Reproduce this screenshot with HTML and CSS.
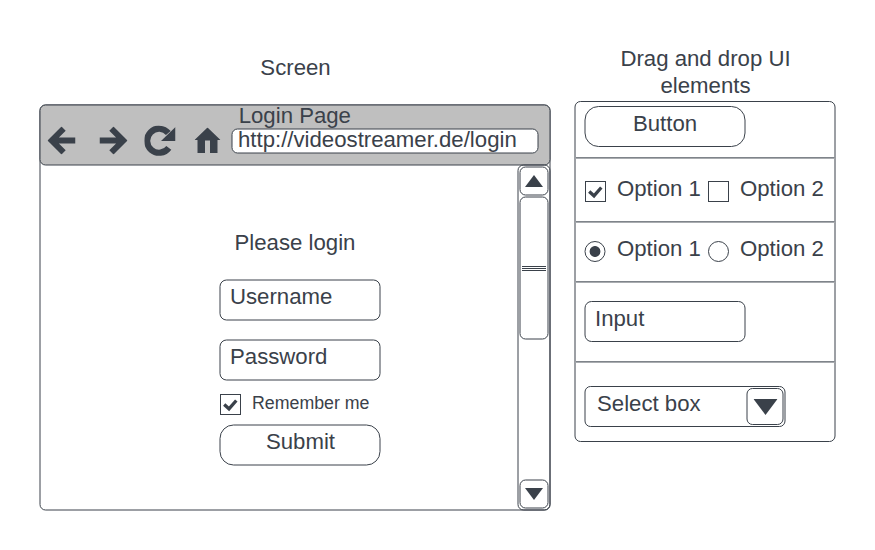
FILE: index.html
```html
<!DOCTYPE html>
<html lang="en">
<head>
<meta charset="utf-8">
<title>Login wireframe</title>
<link rel="stylesheet" href="styles.css">
</head>
<body>
<main class="board">
  <section class="screen">
    <h2 class="caption">Screen</h2>
    <div class="window">
      <header class="toolbar">
        <nav class="nav">
          <svg class="arrow" viewBox="0 0 28 28"><path d="M0 14 14 0l4.200 4.200-6.800 6.900H28v5.800H11.400l6.800 6.900L14 28z"/></svg>
          <svg class="arrow forward" viewBox="0 0 28 28"><path d="M28 14 14 0 9.800 4.200l6.800 6.900H0v5.800h16.600l-6.800 6.900L14 28z"/></svg>
          <svg class="reload" viewBox="0 0 31 31"><path class="ring" d="M24.300 22.300A12 12 0 1 1 23.800 7.500"/><path d="M31 1.500V15.500H16.500z"/></svg>
          <svg class="home" viewBox="0 0 26 26"><path d="M13 0 26 12.500H23V25.500H15.500V13H10.500V25.500H3V12.500H0z"/></svg>
        </nav>
        <div class="location">
          <div class="page-title">Login Page</div>
          <div class="address">http://videostreamer.de/login</div>
        </div>
      </header>
      <div class="content">
        <form class="login">
          <p class="prompt">Please login</p>
          <div class="field">Username</div>
          <div class="field">Password</div>
          <div class="remember">
            <span class="check"><svg viewBox="0 0 19 19"><path d="M3.200 9.500 8 13.800 15.300 5.500"/></svg></span>
            <span>Remember me</span>
          </div>
          <div class="button">Submit</div>
        </form>
        <div class="scrollbar">
          <div class="step"><svg viewBox="0 0 18 12"><path d="M9 0 18 12H0z"/></svg></div>
          <div class="thumb"><i></i><i></i><i></i></div>
          <div class="step last"><svg viewBox="0 0 18 12"><path d="M9 12 18 0H0z"/></svg></div>
        </div>
      </div>
    </div>
  </section>

  <section class="palette">
    <h2 class="caption">Drag and drop UI elements</h2>
    <div class="panel">
      <div class="row row-button"><div class="button">Button</div></div>
      <div class="row row-checks">
        <span class="check"><svg viewBox="0 0 19 19"><path d="M3.200 9.500 8 13.800 15.300 5.500"/></svg></span><span class="option">Option 1</span>
        <span class="check"></span><span class="option">Option 2</span>
      </div>
      <div class="row row-radios">
        <span class="radio on"></span><span class="option">Option 1</span>
        <span class="radio"></span><span class="option">Option 2</span>
      </div>
      <div class="row row-input"><div class="field">Input</div></div>
      <div class="row row-select">
        <div class="select"><span>Select box</span><div class="drop"><svg viewBox="0 0 24 16"><path d="M0 0H24L12 16z"/></svg></div></div>
      </div>
    </div>
  </section>
</main>
</body>
</html>
```
FILE: styles.css
```css
* { box-sizing: border-box; }
body {
  margin: 0;
  width: 875px;
  height: 550px;
  overflow: hidden;
  background: #fff;
  color: #3a414a;
  font: 22.2px/27px "Liberation Sans", Arial, sans-serif;
}
svg { display: block; fill: #3a414a; }
.board { display: flex; gap: 24px; padding: 0 0 0 40px; }
.caption { margin: 0; font: inherit; text-align: center; }

.screen { width: 511px; padding-top: 54px; }
.window {
  height: 406px;
  margin-top: 24px;
  border: 1px solid #3a414a;
  border-radius: 6px;
  transform: translate(-.5px, -.5px);
}
.toolbar {
  display: flex;
  height: 61px;
  margin: -1px -1px 0;
  border: 1px solid #3a414a;
  border-radius: 6px;
  background: #bfbfbf;
}
.nav { display: flex; width: 191px; padding: 20.500px 0 0 7px; }
.arrow { width: 28px; height: 28px; margin-top: .5px; }
.forward { margin-left: 24px; }
.reload { width: 31px; height: 31px; margin: -.5px 0 0 17px; }
.ring { fill: none; stroke: #3a414a; stroke-width: 6.200px; }
.home { width: 26px; height: 26px; margin: 1.500px 0 0 18.500px; }
.page-title { height: 23px; margin-top: -4px; padding-left: 7.200px; }
.address {
  width: 307px;
  height: 25px;
  margin-top: 4px;
  padding-left: 5.500px;
  border: 1px solid #3a414a;
  border-radius: 6px;
  background: #fff;
  line-height: 20px;
  white-space: nowrap;
}
.content { display: flex; justify-content: space-between; height: 346px; margin: -1px -1px 0 0; }
.login { width: 161px; margin: 64px 0 0 179px; }
.prompt { margin: 0 0 24px; padding-right: 10px; text-align: center; }
.field, .button {
  width: 161px;
  height: 41px;
  border: 1px solid #3a414a;
  border-radius: 7px;
}
.field { padding: 3px 9.500px; }
.login .field { margin-bottom: 19px; padding-top: 2px; }
.login .field + .field { margin-bottom: 14px; }
.button { padding-top: 3px; border-radius: 14px; text-align: center; }
.login .button { padding: 2px 0 0 1px; }
.check, .radio { flex: none; width: 21px; height: 21px; border: 1px solid #3a414a; }
.check svg { width: 19px; height: 19px; fill: none; stroke: #3a414a; stroke-width: 3.300px; }
.radio { border-radius: 50%; }
.on { background: radial-gradient(circle, #3a414a 5px, transparent 5.800px); }
.remember { display: flex; gap: 11.500px; height: 30px; font-size: 17.770px; line-height: 16px; white-space: nowrap; }
.remember .check { transform: translate(.5px, -.5px); }
.scrollbar {
  display: flex;
  flex-direction: column;
  width: 33px;
  padding: 1px;
  border: 1px solid #3a414a;
  border-radius: 6px;
}
.step, .thumb {
  display: flex;
  align-items: center;
  justify-content: center;
  width: 29px;
  height: 29px;
  border: 1px solid #3a414a;
  border-radius: 6px;
}
.step svg { width: 18px; height: 12px; transform: translate(-.5px, -.5px); }
.thumb { flex-direction: column; gap: 1px; height: 143px; margin-top: 1px; }
.thumb i { width: 24px; height: 1px; background: #3a414a; transform: translate(-.5px, .5px); }
.last { margin-top: auto; }

.palette { width: 261px; padding-top: 45px; }
.palette .caption { padding: 0 30px; }
.panel {
  height: 341px;
  margin-top: 2px;
  border: 1px solid #3a414a;
  border-radius: 6px;
  transform: translateX(-.5px);
}
.row { display: flex; padding-left: 9px; border-bottom: 1px solid #a9acb0; box-shadow: inset 0 -1px #7f848a; }
.row-button { height: 57px; padding-top: 4px; }
.row-checks { height: 64px; padding-top: 16px; }
.row-radios { height: 60px; padding-top: 12px; }
.row-input { height: 80px; padding-top: 18px; }
.row-select { height: 78px; padding-top: 23px; border: 0; box-shadow: none; }
.row .check { margin-top: 6px; transform: translateX(.5px); }
.row .radio { margin-top: 6px; }
.row .radio:not(.on) { transform: translateX(.5px); }
.option { width: 91px; margin-left: 11px; padding-left: .5px; white-space: nowrap; }
.select {
  display: flex;
  justify-content: space-between;
  width: 201px;
  height: 41px;
  padding: 1px 1px 1px 11.500px;
  border: 1px solid #3a414a;
  border-radius: 6px;
}
.select span { margin-top: 2px; }
.drop {
  display: flex;
  align-items: center;
  justify-content: center;
  width: 37px;
  height: 37px;
  border: 1px solid #3a414a;
  border-radius: 6px;
}
.drop svg { width: 24px; height: 16px; }
```
